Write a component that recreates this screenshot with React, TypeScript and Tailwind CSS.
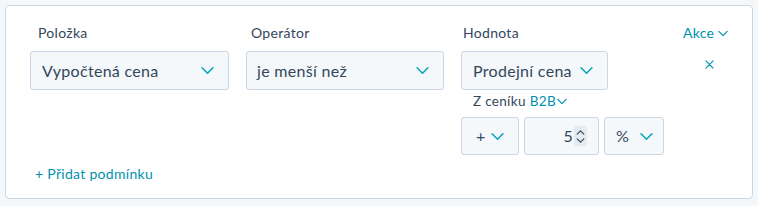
import React from "react";

const font = { fontFamily: "Lato, 'Noto Sans', sans-serif", letterSpacing: "0.3px" };

const Chevron = ({ className = "" }: { className?: string }) => (
  <svg viewBox="0 0 12 8" className={className} fill="none">
    <path d="M1 1.5l5 5 5-5" stroke="currentColor" strokeWidth="1.4" strokeLinecap="round" strokeLinejoin="round" />
  </svg>
);

const Select: React.FC<{ value: string; className?: string }> = ({ value, className = "" }) => (
  <div
    className={`flex items-center justify-between rounded-[3px] border border-[#cbd6e2] bg-[#f5f8fa] ${className}`}
  >
    <span className="text-[16px] text-[#33475b]">{value}</span>
    <Chevron className="w-[13px] h-[9px] text-[#00a4bd]" />
  </div>
);

export default function App() {
  return (
    <div className="w-[758px] h-[206px] bg-[#f5f8fa] p-[5px]" style={font}>
      <div className="h-[194px] rounded-[4px] border border-[#cbd6e2] bg-white pl-[24px] pr-[22px] pt-[17px]">
        <div className="flex">
          <div className="w-[199px]">
            <div className="pl-[8px] text-[14px] leading-[20px] text-[#33475b]">Položka</div>
            <Select value="Vypočtená cena" className="mt-[8px] h-[39px] pl-[11px] pr-[14px]" />
          </div>
          <div className="ml-[17px] w-[198px]">
            <div className="pl-[5px] text-[14px] leading-[20px] text-[#33475b]">Operátor</div>
            <Select value="je menší než" className="mt-[8px] h-[39px] pl-[10px] pr-[14px]" />
          </div>
          <div className="ml-[17px] w-[205px]">
            <div className="pl-[2px] text-[14px] leading-[20px] text-[#33475b]">Hodnota</div>
            <Select value="Prodejní cena" className="mt-[8px] h-[39px] w-[147px] pl-[11px] pr-[14px]" />
            <div className="mt-[1px] flex items-center pl-[12px] text-[13.5px] leading-[20px] text-[#33475b]">
              <span>Z ceníku</span>
              <span className="ml-[4px] text-[#0091ae]">B2B</span>
              <Chevron className="ml-[1px] w-[10px] h-[7px] text-[#0091ae]" />
            </div>
            <div className="mt-[6px] flex gap-[5px]">
              <Select value="+" className="h-[38px] w-[58px] pl-[14px] pr-[14px]" />
              <div className="flex h-[38px] w-[75px] items-center justify-end rounded-[3px] border border-[#cbd6e2] bg-[#f5f8fa] pr-[11px]">
                <span className="text-[16px] text-[#33475b]">5</span>
                <div className="ml-[1px] flex h-[20px] w-[13px] flex-col items-center justify-center gap-[3px] rounded-[3px] bg-[#e5eaf0]">
                  <svg viewBox="0 0 10 6" className="w-[9px] h-[5px]" fill="none">
                    <path d="M1 5l4-4 4 4" stroke="#33475b" strokeWidth="1.4" strokeLinecap="round" strokeLinejoin="round" />
                  </svg>
                  <svg viewBox="0 0 10 6" className="w-[9px] h-[5px]" fill="none">
                    <path d="M1 1l4 4 4-4" stroke="#33475b" strokeWidth="1.4" strokeLinecap="round" strokeLinejoin="round" />
                  </svg>
                </div>
              </div>
              <Select value="%" className="h-[38px] w-[60px] pl-[11px] pr-[10px]" />
            </div>
          </div>
          <div className="ml-[17px] flex flex-col items-center">
            <div className="flex items-center text-[14px] leading-[20px] text-[#0091ae]">
              <span>Akce</span>
              <Chevron className="ml-[4px] w-[10px] h-[7px]" />
            </div>
            <svg viewBox="0 0 10 10" className="mt-[17px] ml-[8px] w-[9px] h-[9px]" fill="none">
              <path d="M1 1l8 8M9 1l-8 8" stroke="#0091ae" strokeWidth="1.3" strokeLinecap="round" />
            </svg>
          </div>
        </div>
        <div className="mt-[9px] pl-[5px] text-[14px] leading-[20px] text-[#0091ae]">+ Přidat podmínku</div>
      </div>
    </div>
  );
}
